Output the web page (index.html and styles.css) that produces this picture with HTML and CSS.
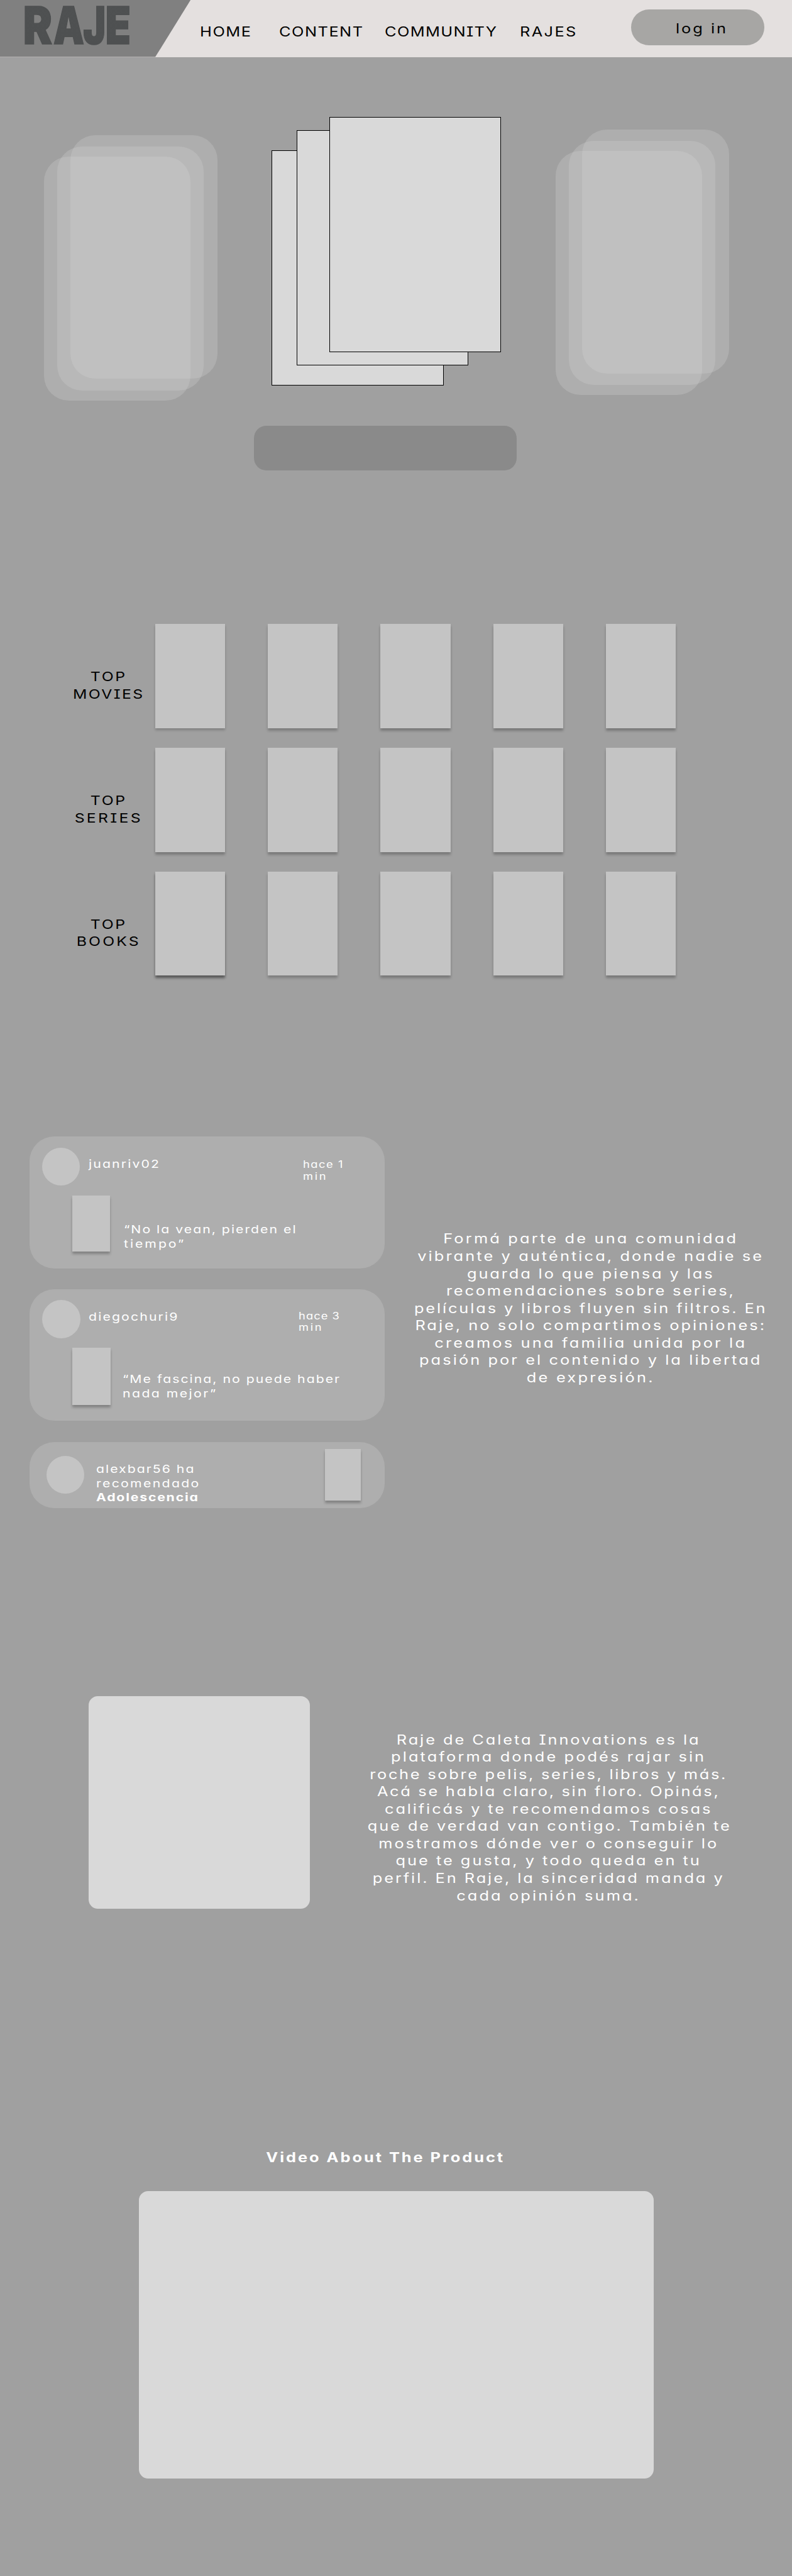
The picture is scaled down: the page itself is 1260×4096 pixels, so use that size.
FILE: index.html
```html
<!DOCTYPE html>
<html lang="es">
<head>
<meta charset="utf-8">
<title>Raje</title>
<link rel="stylesheet" href="styles.css">
</head>
<body>
<header class="header">
  <div class="brand">
    <svg class="logo" viewBox="0 0 170 63" role="img" aria-label="RAJE">
      <defs>
        <linearGradient id="ink" x1="0" y1="0" x2="0" y2="1">
          <stop offset="0" stop-color="#4f5152"/>
          <stop offset=".8" stop-color="#4e5051"/>
          <stop offset="1" stop-color="#434445"/>
        </linearGradient>
      </defs>
      <text transform="translate(-2.4 61.5) scale(.84 1)">R</text>
      <text transform="translate(46.4 61.5) scale(.75 1)">A</text>
      <text transform="translate(94.8 61.5) scale(.73 1)">J</text>
      <text transform="translate(130.6 61.5) scale(.8 1)">E</text>
    </svg>
  </div>
  <nav class="nav">
    <a class="wide home">HOME</a>
    <a class="wide content">CONTENT</a>
    <a class="wide community-link">COMMUNITY</a>
    <a class="wide rajes">RAJES</a>
  </nav>
  <a class="login"><span class="wide">log in</span></a>
</header>

<main>
  <section class="hero">
    <div class="stacks">
      <div class="stack soft left"><i></i><i></i><i></i></div>
      <div class="stack covers"><i></i><i></i><i></i></div>
      <div class="stack soft right"><i></i><i></i><i></i></div>
    </div>
    <div class="cta"></div>
  </section>

  <section class="tops">
    <div class="row">
      <h2 class="label wide"><span>TOP</span><span class="movies">MOVIES</span></h2>
      <div class="tile light"></div><div class="tile mid"></div><div class="tile"></div><div class="tile"></div><div class="tile"></div>
    </div>
    <div class="row">
      <h2 class="label wide"><span>TOP</span><span class="series">SERIES</span></h2>
      <div class="tile"></div><div class="tile"></div><div class="tile"></div><div class="tile"></div><div class="tile"></div>
    </div>
    <div class="row">
      <h2 class="label wide"><span>TOP</span><span class="books">BOOKS</span></h2>
      <div class="tile dark"></div><div class="tile mid"></div><div class="tile"></div><div class="tile"></div><div class="tile"></div>
    </div>
  </section>

  <section class="community">
    <div class="feed">
      <article class="post first">
        <div class="post-head">
          <div class="avatar"></div>
          <div class="name wide">juanriv02</div>
          <div class="time wide"><span>hace 1</span><span>min</span></div>
        </div>
        <div class="post-body">
          <div class="poster"></div>
          <div class="quote wide"><span>“No la vean, pierden el</span><span>tiempo”</span></div>
        </div>
      </article>
      <article class="post second">
        <div class="post-head">
          <div class="avatar"></div>
          <div class="name wide">diegochuri9</div>
          <div class="time wide"><span>hace 3</span><span>min</span></div>
        </div>
        <div class="post-body">
          <div class="poster"></div>
          <div class="quote wide"><span>“Me fascina, no puede haber</span><span>nada mejor”</span></div>
        </div>
      </article>
      <article class="post third">
        <div class="avatar"></div>
        <div class="note wide"><span>alexbar56 ha</span><span>recomendado</span><strong>Adolescencia</strong></div>
        <div class="poster"></div>
      </article>
    </div>
    <p class="copy join wide">
      <span>Formá parte de una comunidad</span>
      <span>vibrante y auténtica, donde nadie se</span>
      <span>guarda lo que piensa y las</span>
      <span>recomendaciones sobre series,</span>
      <span>películas y libros fluyen sin filtros. En</span>
      <span>Raje, no solo compartimos opiniones:</span>
      <span>creamos una familia unida por la</span>
      <span>pasión por el contenido y la libertad</span>
      <span>de expresión.</span>
    </p>
  </section>

  <section class="about">
    <div class="picture"></div>
    <p class="copy story wide">
      <span>Raje de Caleta Innovations es la</span>
      <span>plataforma donde podés rajar sin</span>
      <span>roche sobre pelis, series, libros y más.</span>
      <span>Acá se habla claro, sin floro. Opinás,</span>
      <span>calificás y te recomendamos cosas</span>
      <span>que de verdad van contigo. También te</span>
      <span>mostramos dónde ver o conseguir lo</span>
      <span>que te gusta, y todo queda en tu</span>
      <span>perfil. En Raje, la sinceridad manda y</span>
      <span>cada opinión suma.</span>
    </p>
  </section>

  <section class="video">
    <h2 class="video-title wide">Video About The Product</h2>
    <div class="player"></div>
  </section>
</main>
</body>
</html>
```
FILE: styles.css
```css
* { box-sizing: border-box; }
html { background: #a0a0a0; }
body {
  margin: 0;
  width: 1280px;
  height: 4160px;
  zoom: .984375;
  background: #a0a0a0;
  color: #fff;
  font-family: Inter, "Liberation Sans", sans-serif;
  font-feature-settings: "cv11", "cv08";
}
h2, p { margin: 0; font-weight: 400; }

/* expanded lettering */
.wide { transform: translateY(1px) scaleX(1.2); transform-origin: 0 0; white-space: nowrap; }
.wide > span, .wide > strong { display: block; }

.header { display: flex; height: 92px; background: #e4e0df; color: #000; }
.brand {
  position: relative;
  flex: none;
  width: 308px;
  padding: 9px 0 0 40px;
}
/* slanted plate behind the logo */
.brand::before {
  content: "";
  position: absolute;
  inset: 0;
  background: #808080;
  clip-path: polygon(0 0, 100% 0, 251px 100%, 0 100%);
}
.logo { position: relative; display: block; width: 170px; height: 63px; overflow: visible; }
.logo text {
  font: 900 84px Inter, "Liberation Sans", sans-serif;
  fill: url(#ink);
  stroke: #4e5051;
  stroke-width: 1.5px;
}
.nav {
  flex: none;
  display: grid;
  grid-template-columns: 128.3px 170.5px 218.2px 180px;
  width: 712px;
  padding: 36.5px 0 0 15.2px;
  font-size: 21.5px;
  line-height: 28px;
}
.home { letter-spacing: 1.3px; }
.content { letter-spacing: 1.25px; }
.community-link { letter-spacing: 1.15px; }
.rajes { letter-spacing: 2px; }
.login {
  flex: none;
  width: 215px;
  height: 58px;
  margin-top: 15px;
  padding: 16px 0 0 72px;
  border-radius: 29px;
  background: #a7a6a4;
  font-size: 21.5px;
  line-height: 28px;
  letter-spacing: 2.5px;
}
.login .wide { display: block; }

.hero { height: 916px; padding-top: 97px; }
.stacks { display: flex; gap: 88px; height: 458px; padding-left: 71px; }
.stack { position: relative; flex: none; }
.stack i { position: absolute; }
.soft { width: 280px; height: 429px; }
.soft i { width: 237px; height: 394px; border-radius: 40px; background: rgba(217, 217, 217, .25); }
.soft i:nth-child(1) { left: 43px; top: 0; }
.soft i:nth-child(2) { left: 21px; top: 19px; }
.soft i:nth-child(3) { left: 0; top: 35px; }
.left { margin-top: 29px; }
.right { margin-top: 20px; }
.covers { width: 371px; height: 434px; }
.covers i { width: 278px; height: 380px; border: 1px solid #000; background: #d9d9d9; }
.covers i:nth-child(1) { left: 0; top: 54px; }
.covers i:nth-child(2) { left: 40px; top: 21px; }
.covers i:nth-child(3) { left: 93px; top: 0; }
.cta { width: 425px; height: 72px; margin: 41px 0 0 410px; border-radius: 20px; background: #8a8a8a; }

.tops { display: grid; gap: 32px; }
.row { display: flex; gap: 69px; height: 168px; padding-left: 98.4px; color: #000; }
.label {
  flex: none;
  width: 152.6px;
  margin-right: -69px;
  padding: 70px 0 0 1.2px;
  transform-origin: 50% 0;
  text-align: center;
  font-size: 21px;
  line-height: 28px;
  letter-spacing: 2.2px;
}
.movies { letter-spacing: 2px; }
.series { letter-spacing: 2.8px; }
.books { letter-spacing: 2.65px; }
.tile { flex: none; width: 113px; background: #c4c4c4; box-shadow: 0 4px 4px rgba(0, 0, 0, .25); }
.tile.light { box-shadow: 0 3px 4px rgba(0, 0, 0, .2); }
.tile.mid { box-shadow: 0 4px 4px rgba(0, 0, 0, .22); }
.tile.dark { box-shadow: 0 4px 4px rgba(0, 0, 0, .46); }

.community { display: flex; height: 600px; margin-top: 260px; padding-left: 48px; }
.feed { flex: none; display: grid; grid-template-rows: 213px 212px 107px; gap: 34px; width: 574px; }
.post { border-radius: 40px; background: #aeaeae; }
.post-head, .post-body { display: flex; align-items: flex-start; }
.post-head { height: 95px; }
.avatar { flex: none; width: 61px; height: 61px; border-radius: 50%; background: #c4c4c4; }
.poster { flex: none; width: 61px; height: 91px; background: #c4c4c4; box-shadow: 0 4px 4px rgba(0, 0, 0, .25); }
.name { flex: none; width: 345.8px; margin: 32.3px 0 0 14.5px; font-size: 18px; line-height: 23px; letter-spacing: 1.8px; }
.time { margin-top: 35.2px; font-size: 15.5px; line-height: 19px; letter-spacing: 1.31px; }
.time span:nth-child(2) { letter-spacing: 2.25px; }
.quote { margin: 43.3px 0 0 22px; font-size: 18px; line-height: 23px; letter-spacing: 1.7px; }
.quote span:nth-child(2) { letter-spacing: 2.5px; }
.first .avatar { margin: 18px 0 0 20px; }
.first .poster { margin-left: 69px; }
.second .post-head { height: 94px; }
.second .avatar { width: 62px; height: 62px; margin: 17px 0 0 20px; }
.second .name { width: 338.8px; margin-left: 13.5px; }
.second .time { margin-top: 32.6px; letter-spacing: .9px; }
.second .poster { width: 62px; height: 92px; margin-left: 69px; }
.second .quote { margin: 39px 0 0 19px; letter-spacing: 1.7px; }
.second .quote span:nth-child(2) { letter-spacing: 2.05px; }
.third { display: flex; align-items: flex-start; }
.third .avatar { margin: 23px 0 0 27px; }
.third .poster { width: 58px; height: 83px; margin-top: 12px; }
.note { flex: none; width: 370px; margin: 32px 0 0 19px; font-size: 18px; line-height: 23px; letter-spacing: 1.7px; }
.note span:nth-child(2) { letter-spacing: 1.95px; }
.note strong { letter-spacing: 1.52px; }

.copy { flex: none; padding-left: 2.5px; transform-origin: 50% 0; text-align: center; font-size: 21.5px; line-height: 28px; }
.join { width: 480px; margin: 150.5px 0 0 91.3px; }
.join span:nth-child(1) { letter-spacing: 2.69px; }
.join span:nth-child(2) { letter-spacing: 2.61px; }
.join span:nth-child(3) { letter-spacing: 2.44px; }
.join span:nth-child(4) { letter-spacing: 2.38px; }
.join span:nth-child(5) { letter-spacing: 2.42px; }
.join span:nth-child(6) { letter-spacing: 2.54px; }
.join span:nth-child(7) { letter-spacing: 2.67px; }
.join span:nth-child(8) { letter-spacing: 2.59px; }
.join span:nth-child(9) { letter-spacing: 2.72px; }

.about { display: flex; height: 343px; margin-top: 304px; padding-left: 143px; }
.picture { flex: none; width: 358px; height: 343px; border-radius: 15px; background: #d9d9d9; }
.story { width: 490px; margin: 55.2px 0 0 138.6px; }
.story span:nth-child(1) { letter-spacing: 2.47px; }
.story span:nth-child(2) { letter-spacing: 2.62px; }
.story span:nth-child(3) { letter-spacing: 2.28px; }
.story span:nth-child(4) { letter-spacing: 2.27px; }
.story span:nth-child(5) { letter-spacing: 2.42px; }
.story span:nth-child(6) { letter-spacing: 2.47px; }
.story span:nth-child(7) { letter-spacing: 2.5px; }
.story span:nth-child(8) { letter-spacing: 2.52px; }
.story span:nth-child(9) { letter-spacing: 2.48px; }
.story span:nth-child(10) { letter-spacing: 2.61px; }

.video { padding: 387.4px 0 156px 224px; }
.video-title {
  width: 400px;
  margin-left: 197.9px;
  padding-left: 2.2px;
  transform-origin: 50% 0;
  text-align: center;
  font-size: 21.5px;
  font-weight: 700;
  line-height: 28px;
  letter-spacing: 2.5px;
}
.player { width: 833px; height: 465px; margin-top: 40.6px; border-radius: 15px; background: #d9d9d9; }
```
